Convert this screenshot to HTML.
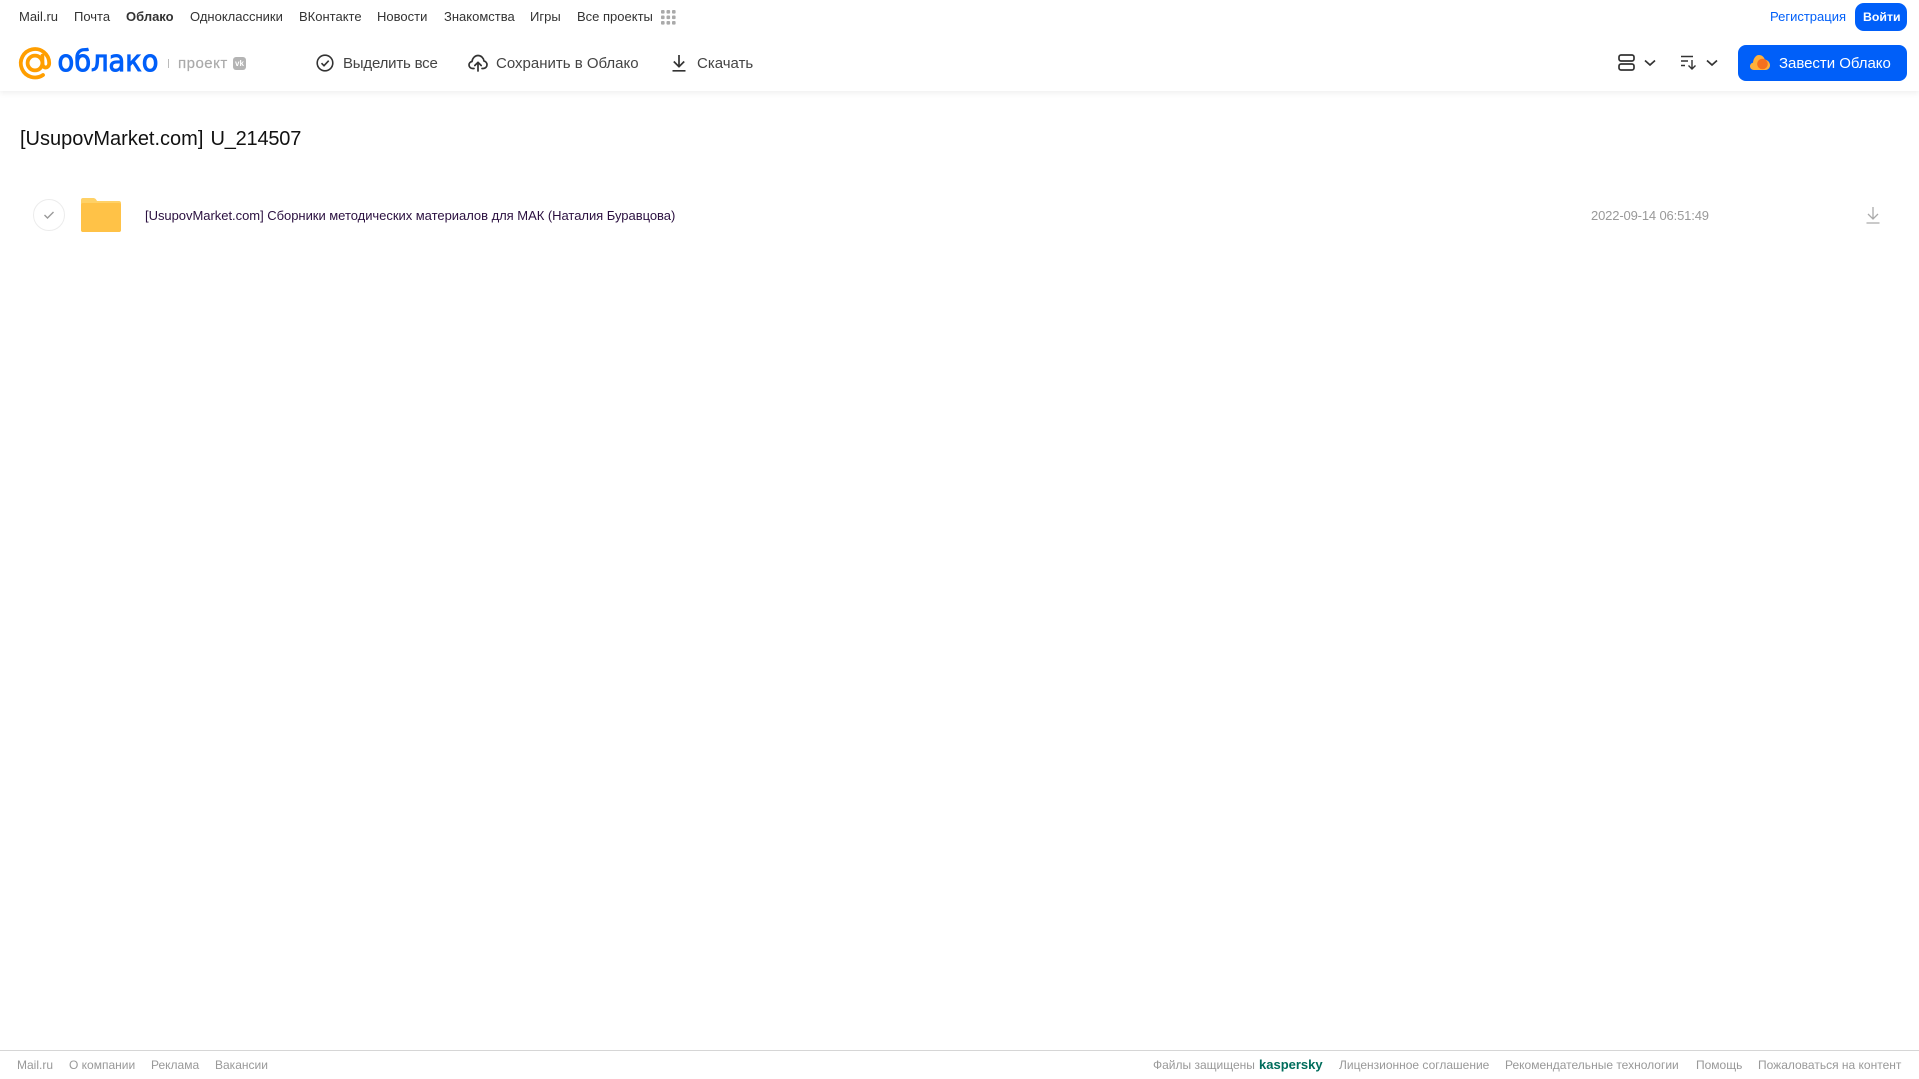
<!DOCTYPE html>
<html lang="ru"><head><meta charset="utf-8"><title>Облако</title>
<style>
html,body{margin:0;padding:0;background:#fff;width:1919px;height:1079px;overflow:hidden}
body{position:relative;font-family:"Liberation Sans",Arial,sans-serif}
.t{position:absolute;white-space:nowrap;line-height:16px}
.n{top:9px;font-size:13px;color:#333}
.b{top:56px;font-size:15px;color:#444}
.f{top:1057px;font-size:12px;color:#999}
svg{position:absolute;display:block}
#hd{position:absolute;left:0;top:0;width:1919px;height:91px;background:#fff;box-shadow:0 2px 6px rgba(0,0,0,.07)}
</style></head><body>
<div id="hd"></div>
<span class="t n" style="left:19px">Mail.ru</span>
<span class="t n" style="left:74px">Почта</span>
<span class="t n" style="left:126px;font-weight:700">Облако</span>
<span class="t n" style="left:190px">Одноклассники</span>
<span class="t n" style="left:299px">ВКонтакте</span>
<span class="t n" style="left:377px">Новости</span>
<span class="t n" style="left:444px">Знакомства</span>
<span class="t n" style="left:530px">Игры</span>
<span class="t n" style="left:577px">Все проекты</span>
<svg style="left:661px;top:10px" width="15" height="15" fill="#aaa"><rect x="0" y="0" width="3.6" height="3.6" rx="1"/><rect x="5.5" y="0" width="3.6" height="3.6" rx="1"/><rect x="11" y="0" width="3.6" height="3.6" rx="1"/><rect x="0" y="5.5" width="3.6" height="3.6" rx="1"/><rect x="5.5" y="5.5" width="3.6" height="3.6" rx="1"/><rect x="11" y="5.5" width="3.6" height="3.6" rx="1"/><rect x="0" y="11" width="3.6" height="3.6" rx="1"/><rect x="5.5" y="11" width="3.6" height="3.6" rx="1"/><rect x="11" y="11" width="3.6" height="3.6" rx="1"/></svg>
<span class="t n" style="left:1770px;color:#005ff9">Регистрация</span>
<div style="position:absolute;left:1855px;top:3px;width:52px;height:28px;border-radius:9px;background:#005ff9"></div>
<span class="t n" style="left:1863px;color:#fff;font-weight:700;font-size:12.3px">Войти</span>

<svg style="left:17px;top:45px" width="36" height="36" viewBox="0 0 36 36" fill="none" stroke="#ff9e00" stroke-width="3.8" stroke-linecap="round"><circle cx="18" cy="18" r="7.400"/><path d="M26 30A14.200 14.200 0 1 1 32.200 18c0 5.800-6.800 6.300-6.800 0v-7.400"/></svg>
<svg style="left:56px;top:44px" width="106" height="36"><text x="1.500" y="27" font-family="DejaVu Sans" font-size="29" fill="#005ff9" stroke="#005ff9" stroke-width="1" textLength="101" lengthAdjust="spacingAndGlyphs">облако</text></svg>
<div style="position:absolute;left:168px;top:59px;width:1px;height:9px;background:#bbb"></div>
<span class="t" style="left:178px;top:56px;font-size:15px;color:#aaa;letter-spacing:.5px;-webkit-text-stroke:.2px #aaa">проект</span>
<div style="position:absolute;left:233px;top:57px;width:13px;height:13px;border-radius:3px;background:#b4b4b4;color:#fff;font-size:8px;font-weight:700;line-height:13px;text-align:center">vk</div>

<svg style="left:316px;top:54px" width="18" height="18" fill="none" stroke="#333" stroke-width="1.600"><circle cx="9" cy="9" r="7.800"/><path d="M5.500 9.200l2.500 2.500 4.700-5"/></svg>
<span class="t b" style="left:343px;letter-spacing:-.2px">Выделить все</span>
<svg style="left:468px;top:54px" width="20" height="18" fill="none" stroke="#333" stroke-width="1.700" stroke-linecap="round" stroke-linejoin="round"><path d="M6 14.500H4.800C2.600 14.500 1 13 1 11c0-1.800 1.300-3.200 3-3.500C4.500 4 7 1.500 10 1.500c3.200 0 5.500 2.400 6 5.500 1.800.4 3 2 3 3.800 0 2-1.600 3.700-3.800 3.700H14"/><path d="M10 17V8.500M6.800 11.500L10 8.300l3.200 3.200"/></svg>
<span class="t b" style="left:496px">Сохранить в Облако</span>
<svg style="left:671px;top:54px" width="16" height="18" fill="none" stroke="#333" stroke-width="1.700"><path d="M8 1v11.500M2.800 7.500L8 12.700l5.200-5.200M1.500 16.800h13"/></svg>
<span class="t b" style="left:697px">Скачать</span>

<svg style="left:1618px;top:54px" width="17" height="17" fill="none" stroke="#333" stroke-width="1.700"><rect x="1" y="1" width="15" height="6" rx="2"/><rect x="1" y="10" width="15" height="6" rx="2"/></svg>
<svg style="left:1644px;top:59px" width="12" height="8" fill="none" stroke="#333" stroke-width="1.700"><path d="M1 1.500l5 4.500 5-4.500"/></svg>
<svg style="left:1680px;top:55px" width="18" height="15" fill="none" stroke="#333" stroke-width="1.400"><path d="M1 1.500h12M1 6h7M1 10.500h4M12 5v9M8.500 10.500L12 14l3.500-3.500"/></svg>
<svg style="left:1706px;top:59px" width="12" height="8" fill="none" stroke="#333" stroke-width="1.700"><path d="M1 1.500l5 4.500 5-4.500"/></svg>
<div style="position:absolute;left:1738px;top:45px;width:169px;height:36px;border-radius:8px;background:#005ff9"></div>
<svg style="left:1750px;top:54px" width="20" height="17"><path d="M4 16C1.500 16 0 14.300 0 12.300 0 10.500 1.200 9 3 8.700 3.300 5 5.500 1 9 1c3 0 5 2 5.800 4.500C17.800 6 20 8.500 20 11.300 20 14 18 16 15.500 16z" fill="#ffb03a"/><circle cx="12.500" cy="10" r="5.300" fill="#f5701f"/></svg>
<span class="t" style="left:1779px;top:56px;font-size:15px;color:#fff;letter-spacing:-.03px">Завести Облако</span>

<span class="t" style="left:20px;top:127px;font-size:20px;line-height:24px;color:#111;word-spacing:1.500px">[UsupovMarket.com] <span style="letter-spacing:-.2px">U_214507</span></span>

<div style="position:absolute;left:33px;top:199px;width:30px;height:30px;border:1px solid #ececec;border-radius:50%"></div>
<svg style="left:43px;top:210px" width="12" height="10" fill="none" stroke="#999" stroke-width="1.400"><path d="M1.500 5l3 3 6-6"/></svg>
<svg style="left:81px;top:198px" width="40" height="34"><path d="M2 0h10c2 0 3 1 4 3h22c1.200 0 2 .8 2 2v27c0 1.200-.8 2-2 2H2c-1.200 0-2-.8-2-2V2C0 .8.800 0 2 0z" fill="#ffd166"/><path d="M2 5h36c1.200 0 2 .8 2 2v25c0 1.200-.8 2-2 2H2c-1.200 0-2-.8-2-2V7c0-1.200.8-2 2-2z" fill="#ffc247"/></svg>
<span class="t" style="left:145px;top:208px;font-size:13px;color:#2b1040;letter-spacing:-.03px">[UsupovMarket.com] Сборники методических материалов для МАК (Наталия Буравцова)</span>
<span class="t" style="left:1591px;top:208px;font-size:13px;color:#999;letter-spacing:-.15px">2022-09-14 06:51:49</span>
<svg style="left:1866px;top:206px" width="14" height="18" fill="none" stroke="#aaa" stroke-width="1.300"><path d="M7 1v12M2 8l5 5 5-5M.5 17h13"/></svg>

<div style="position:absolute;left:0;top:1050px;width:1919px;height:1px;background:#d6d6d6"></div>
<span class="t f" style="left:17px">Mail.ru</span>
<span class="t f" style="left:69px">О компании</span>
<span class="t f" style="left:151px">Реклама</span>
<span class="t f" style="left:215px">Вакансии</span>
<span class="t f" style="left:1153px">Файлы защищены</span>
<span class="t f" style="left:1259px;font-size:13px;font-weight:700;color:#006d5c">kaspersky</span>
<span class="t f" style="left:1339px">Лицензионное соглашение</span>
<span class="t f" style="left:1505px">Рекомендательные технологии</span>
<span class="t f" style="left:1696px">Помощь</span>
<span class="t f" style="left:1758px">Пожаловаться на контент</span>
</body></html>
